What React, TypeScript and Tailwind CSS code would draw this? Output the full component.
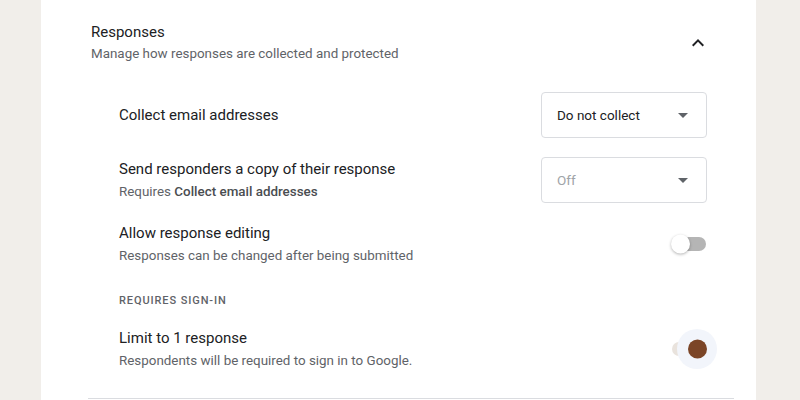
import React from 'react';

const Dropdown = ({ value, muted }: { value: string; muted?: boolean }) => (
  <div className="w-[166px] h-[46px] border border-[#dadce0] rounded-[4px] flex items-center justify-between pl-[15px] pr-[18px] shrink-0">
    <span className={muted ? 'text-[13.5px] text-[#a0a4a8]' : 'text-[13.5px] text-[#202124]'}>{value}</span>
    <span className="w-0 h-0 border-l-[5px] border-r-[5px] border-t-[5px] border-l-transparent border-r-transparent border-t-[#5f6368]" />
  </div>
);

const Toggle = ({ on }: { on?: boolean }) =>
  on ? (
    <div className="relative w-[34px] h-[14px] mr-px">
      <div className="w-full h-full rounded-full bg-[#e9e3dd]" />
      <div className="absolute right-[-11px] top-1/2 -translate-y-1/2 w-[40px] h-[40px] rounded-full bg-[#f2f5fb]" />
      <div className="absolute right-[-1px] top-1/2 -translate-y-1/2 w-[19px] h-[19px] rounded-full bg-[#7b4527]" />
    </div>
  ) : (
    <div className="relative w-[34px] h-[14px] mr-px">
      <div className="w-full h-full rounded-full bg-[#b5b5b5]" />
      <div className="absolute left-[-1px] top-1/2 -translate-y-1/2 w-[19px] h-[19px] rounded-full bg-white shadow-[0_1px_3px_rgba(0,0,0,0.3)]" />
    </div>
  );

const Row = ({ title, sub, children }: { title: string; sub?: React.ReactNode; children: React.ReactNode }) => (
  <div className="flex items-center justify-between">
    <div>
      <div className="text-[15px] leading-[22px] text-[#202124]">{title}</div>
      {sub && <div className="text-[13.4px] leading-[21px] text-[#5f6368] mt-px">{sub}</div>}
    </div>
    {children}
  </div>
);

const App = () => {
  return (
    <div className="w-[800px] h-[400px] bg-[#f1eeea] overflow-hidden" style={{ fontFamily: 'Roboto, "Liberation Sans", sans-serif' }}>
      <div className="ml-[41px] w-[715px] h-[400px] bg-white pl-[50px] pr-[49px] pt-[21px]">
        <div className="flex justify-between">
          <div>
            <div className="text-[15px] leading-[22px] text-[#202124]">Responses</div>
            <div className="text-[13.4px] leading-[20px] text-[#5f6368] mt-px">Manage how responses are collected and protected</div>
          </div>
          <svg width="24" height="24" viewBox="0 0 24 24" className="mt-[10px] mr-[-3px]">
            <path d="M7.41 15.41 12 10.83l4.59 4.58L18 14l-6-6-6 6z" fill="#202124" />
          </svg>
        </div>

        <div className="pl-[28px] mt-[28px]">
          <Row title="Collect email addresses">
            <Dropdown value="Do not collect" />
          </Row>
          <div className="mt-[19px]">
            <Row
              title="Send responders a copy of their response"
              sub={<>Requires <span className="font-medium text-[#4a4d51]">Collect email addresses</span></>}
            >
              <Dropdown value="Off" muted />
            </Row>
          </div>
          <div className="mt-[19px]">
            <Row title="Allow response editing" sub="Responses can be changed after being submitted">
              <Toggle />
            </Row>
          </div>
          <div className="mt-[27px] text-[11px] leading-[16px] font-medium tracking-[0.9px] text-[#5f6368]">REQUIRES SIGN-IN</div>
          <div className="mt-[18px]">
            <Row title="Limit to 1 response" sub="Respondents will be required to sign in to Google.">
              <Toggle on />
            </Row>
          </div>
        </div>
        <div className="mt-[27px] ml-[-3px] mr-[-27px] border-t border-[#dadce0]" />
      </div>
    </div>
  );
};

export default App;
